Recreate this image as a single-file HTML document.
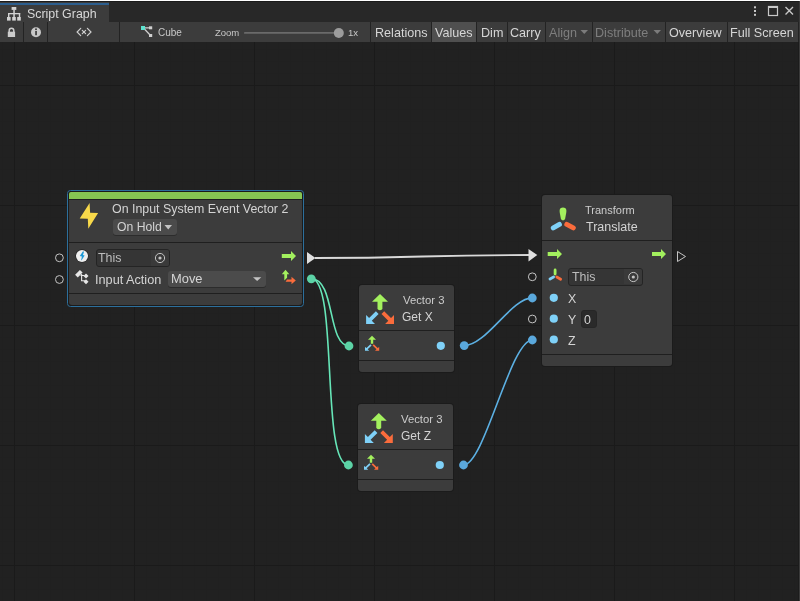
<!DOCTYPE html>
<html><head><meta charset="utf-8"><style>
*{box-sizing:border-box;margin:0;padding:0}
html,body{width:800px;height:601px;overflow:hidden;background:#212121;font-family:"Liberation Sans",sans-serif;color:#d2d2d2}
.abs{position:absolute}
#grid{position:absolute;left:0;top:42px;width:800px;height:559px;background-color:#212121;
 background-image:
  linear-gradient(to right, #1a1a1a 1px, transparent 1px),
  linear-gradient(to bottom, #1a1a1a 1px, transparent 1px),
  linear-gradient(to right, #202020 1px, transparent 1px),
  linear-gradient(to bottom, #202020 1px, transparent 1px);
 background-size:120px 120px,120px 120px,12px 12px,12px 12px;
 background-position:14px 43px,14px 43px,2px 7px,2px 7px;}
.t{position:absolute;white-space:nowrap;will-change:transform}
.node{position:absolute;background:#3c3c3c;border-radius:3px;box-shadow:0 0 0 1px #1b1b1b}
.div{position:absolute;left:0;right:0;height:1px;background:#1f1f1f}
.rect{position:absolute}
</style></head><body>
<div id="grid"></div>
<div class="rect" style="left:0;top:0;width:800px;height:1px;background:#ffffff"></div>
<div class="rect" style="left:0;top:1px;width:800px;height:21px;background:#282828"></div>
<div class="rect" style="left:0;top:1px;width:800px;height:1px;background:#1b1b1b"></div>
<div class="rect" style="left:0;top:2px;width:109px;height:20px;background:#3c3c3c"></div>
<div class="rect" style="left:0;top:3px;width:109px;height:2px;background:#2c5e8e"></div>
<div class="rect" style="left:799px;top:1px;width:1px;height:600px;background:#3a3a3a"></div>
<div class="rect" style="left:798px;top:42px;width:1px;height:559px;background:#1c1c1c"></div>
<svg class="abs" style="left:0;top:0" width="800" height="42" viewBox="0 0 800 42">
 <g fill="#d2d2d2">
 <rect x="11.6" y="7" width="4.7" height="2.9"/>
 <rect x="13.3" y="9.5" width="1.5" height="4"/>
 <rect x="8" y="13" width="12.2" height="1.3"/>
 <rect x="8" y="13" width="1.4" height="4"/>
 <rect x="18.8" y="13" width="1.4" height="4"/>
 <rect x="13.3" y="13" width="1.5" height="4"/>
 <rect x="7" y="17" width="3.6" height="3.6"/>
 <rect x="12.2" y="17" width="3.6" height="3.6"/>
 <rect x="17.2" y="17" width="3.6" height="3.6"/>
 </g>
 <g fill="#c8c8c8">
 <rect x="754" y="6.3" width="2" height="2"/>
 <rect x="754" y="10" width="2" height="2"/>
 <rect x="754" y="13.8" width="2" height="2"/>
 <rect x="768.5" y="6.5" width="9" height="9" fill="none" stroke="#c8c8c8" stroke-width="1.2"/>
 <rect x="768" y="6" width="10" height="2"/>
 </g>
 <path d="M785.5 7 L793 14.5 M793 7 L785.5 14.5" stroke="#c8c8c8" stroke-width="1.4"/>
</svg>
<div class="t" style="left:26.6px;top:8.00px;font-size:12.4px;line-height:12.4px;color:#d8d8d8;">Script Graph</div>

<div class="rect" style="left:0;top:22px;width:799px;height:20px;background:#232323"></div>
<div class="rect" style="left:0px;top:22px;width:23px;height:20px;background:#3c3c3c"></div>
<div class="rect" style="left:24px;top:22px;width:23px;height:20px;background:#3c3c3c"></div>
<div class="rect" style="left:48px;top:22px;width:71px;height:20px;background:#3c3c3c"></div>
<div class="rect" style="left:120px;top:22px;width:250px;height:20px;background:#3c3c3c"></div>
<div class="rect" style="left:371px;top:22px;width:60px;height:20px;background:#3c3c3c"></div>
<div class="rect" style="left:432px;top:22px;width:44px;height:20px;background:#4f4f4f"></div>
<div class="rect" style="left:477px;top:22px;width:30px;height:20px;background:#3c3c3c"></div>
<div class="rect" style="left:508px;top:22px;width:37px;height:20px;background:#3c3c3c"></div>
<div class="rect" style="left:546px;top:22px;width:46px;height:20px;background:#3c3c3c"></div>
<div class="rect" style="left:593px;top:22px;width:72px;height:20px;background:#3c3c3c"></div>
<div class="rect" style="left:666px;top:22px;width:61px;height:20px;background:#3c3c3c"></div>
<div class="rect" style="left:728px;top:22px;width:70px;height:20px;background:#3c3c3c"></div>
<div class="t" style="left:374.5px;top:26.93px;font-size:12.6px;line-height:12.6px;color:#d6d6d6;">Relations</div>

<div class="t" style="left:434.5px;top:26.93px;font-size:12.6px;line-height:12.6px;color:#d6d6d6;">Values</div>

<div class="t" style="left:480.75px;top:26.93px;font-size:12.6px;line-height:12.6px;color:#d6d6d6;">Dim</div>

<div class="t" style="left:509.5px;top:26.93px;font-size:12.6px;line-height:12.6px;color:#d6d6d6;">Carry</div>

<div class="t" style="left:669px;top:26.93px;font-size:12.6px;line-height:12.6px;color:#d6d6d6;">Overview</div>

<div class="t" style="left:730px;top:26.93px;font-size:12.6px;line-height:12.6px;color:#d6d6d6;">Full Screen</div>

<div class="t" style="left:548.75px;top:26.93px;font-size:12.6px;line-height:12.6px;color:#7e7e7e;">Align</div>

<div class="t" style="left:595px;top:26.93px;font-size:12.6px;line-height:12.6px;color:#7e7e7e;">Distribute</div>

<div class="t" style="left:158px;top:27.54px;font-size:10px;line-height:10px;color:#c8c8c8;">Cube</div>

<div class="t" style="left:215px;top:27.96px;font-size:9.5px;line-height:9.5px;color:#c8c8c8;">Zoom</div>

<div class="t" style="left:348px;top:27.87px;font-size:9.6px;line-height:9.6px;color:#c8c8c8;">1x</div>

<svg class="abs" style="left:0;top:0" width="800" height="42" viewBox="0 0 800 42">
  <path d="M9.2 32 V30.6 A2.3 2.3 0 0 1 13.8 30.6 V32" fill="none" stroke="#cccccc" stroke-width="1.5"/>
  <rect x="7.8" y="31.7" width="7.3" height="5.3" fill="#cccccc"/>
  <circle cx="36" cy="32.3" r="5" fill="#c8c8c8"/>
  <rect x="35.2" y="31" width="1.7" height="4.2" fill="#3c3c3c"/>
  <circle cx="36" cy="29.3" r="1" fill="#3c3c3c"/>
  <path d="M80.7 28.3 L77.1 32 L80.7 35.6 M87.4 28.3 L91 32 L87.4 35.6 M82.3 30.4 L85.6 33.6 M85.6 30.4 L82.3 33.6" fill="none" stroke="#d0d0d0" stroke-width="1.2" stroke-linecap="round"/>
  <path d="M143.5 27.8 L150 27.8 M143.5 28 L150.5 35.5" stroke="#d0d0d0" stroke-width="1.2"/>
  <rect x="141" y="26" width="4" height="4" fill="#5fe3d0"/>
  <rect x="149" y="26.3" width="3.2" height="3" fill="#d0d0d0"/>
  <rect x="149" y="34" width="3.2" height="3" fill="#d0d0d0"/>
  <rect x="244" y="32.1" width="96" height="1.7" rx="0.85" fill="#6a6a6a"/>
  <circle cx="338.8" cy="33" r="5" fill="#9c9c9c"/>
  <path d="M580.5 30 L588 30 L584.25 34 Z" fill="#7c7c7c"/>
  <path d="M653.5 30 L661 30 L657.25 34 Z" fill="#7c7c7c"/>
</svg>
<div class="abs" style="left:67px;top:190px;width:237px;height:117px;border:1.5px solid #2c6f9c;border-radius:3.5px"></div>
<div class="node" style="left:69px;top:192px;width:233px;height:113px"><div class="div" style="top:7px"></div><div class="div" style="top:50px"></div><div class="div" style="top:101px"></div><div class="abs" style="left:0;top:0;width:233px;height:7px;background:#86c552;border-radius:2px 2px 0 0"></div></div>
<div class="node" style="left:542px;top:195px;width:130px;height:171px"><div class="div" style="top:45px"></div><div class="div" style="top:159px"></div></div>
<div class="node" style="left:359px;top:285px;width:95px;height:87px"><div class="div" style="top:45px"></div><div class="div" style="top:75px"></div></div>
<div class="node" style="left:358px;top:404px;width:95px;height:87px"><div class="div" style="top:45px"></div><div class="div" style="top:75px"></div></div>
<div class="abs" style="left:112.8px;top:218.8px;width:64.4px;height:16.4px;background:#4b4b4b;border-radius:3px;box-shadow:0 1px 0 #2c2c2c"></div>
<div class="abs" style="left:95.5px;top:249.2px;width:74.3px;height:17.6px;background:#353535;border:1px solid #242424;border-radius:3px;overflow:hidden"><div class="abs" style="right:0;top:0;width:18px;height:16px;background:#3a3a3a"></div></div>
<div class="abs" style="left:168px;top:271px;width:98.2px;height:16.2px;background:#4b4b4b;border-radius:3px;box-shadow:0 1px 0 #2c2c2c"></div>
<div class="abs" style="left:568px;top:268px;width:74.5px;height:17.5px;background:#353535;border:1px solid #242424;border-radius:3px;overflow:hidden"><div class="abs" style="right:0;top:0;width:18px;height:15px;background:#3a3a3a"></div></div>
<div class="abs" style="left:581px;top:310.2px;width:15.5px;height:17.5px;background:#2a2a2a;border:1px solid #262626;border-radius:3px"></div>
<svg class="abs" style="left:0;top:0" width="800" height="601" viewBox="0 0 800 601">
 <path d="M315 258 C 420 258, 425 255, 530 255" fill="none" stroke="#d9d9d9" stroke-width="1.8"/>
 <path d="M311.4 278.7 C 335.4 278.7, 327.2 345.8, 349.2 345.8" fill="none" stroke="#66e6b8" stroke-width="1.6"/>
 <path d="M311.4 278.7 C 338.4 278.7, 320.5 465, 348.5 465" fill="none" stroke="#66e6b8" stroke-width="1.6"/>
 <path d="M464.2 345.6 C 486.2 345.6, 511.4 297.9, 532.4 297.9" fill="none" stroke="#5cb0e3" stroke-width="1.6"/>
 <path d="M463.5 465 C 484.5 465, 510.4 340, 532.4 340" fill="none" stroke="#5cb0e3" stroke-width="1.6"/>
 <circle cx="311.3" cy="278.8" r="4.4" fill="#5cd3a6"/>
 <circle cx="349" cy="346" r="4.4" fill="#5cd3a6"/>
 <circle cx="348.4" cy="465" r="4.4" fill="#5cd3a6"/>
 <circle cx="464.2" cy="345.6" r="4.4" fill="#5aa8dc"/>
 <circle cx="463.5" cy="465" r="4.4" fill="#5aa8dc"/>
 <circle cx="532.3" cy="298" r="4.4" fill="#5aa8dc"/>
 <circle cx="532.3" cy="340" r="4.4" fill="#5aa8dc"/>
 <circle cx="59.4" cy="257.8" r="3.9" fill="none" stroke="#c4c4c4" stroke-width="1"/>
 <circle cx="59.4" cy="279.5" r="3.9" fill="none" stroke="#c4c4c4" stroke-width="1"/>
 <circle cx="532.3" cy="276.8" r="3.9" fill="none" stroke="#c4c4c4" stroke-width="1"/>
 <circle cx="532.3" cy="319" r="3.9" fill="none" stroke="#c4c4c4" stroke-width="1"/>
 <path d="M307 252 L315.5 258 L307 264 Z" fill="#e0e0e0"/>
 <path d="M528.5 249 L537.3 255 L528.5 261.5 Z" fill="#e0e0e0"/>
 <path d="M677.5 251.5 L685.5 256.5 L677.5 261.5 Z" fill="none" stroke="#c4c4c4" stroke-width="1"/>
 <path d="M89.6 202.9 L90.1 212.8 L98.1 213 L88.3 228.8 L87.8 218.8 L79.7 218.6 Z" fill="#f8d94a"/>
 <circle cx="82" cy="255.9" r="6.6" fill="#232323"/>
 <circle cx="82" cy="255.9" r="6" fill="#efefef"/>
 <path d="M82.8 251.6 L84.1 251.6 L83.0 255.1 L84.6 255.6 L81.6 260.3 L81.1 260.3 L81.9 256.5 L79.8 256.0 Z" fill="#1d9ad8"/>
 <circle cx="160" cy="258" r="4.6" fill="none" stroke="#c4c4c4" stroke-width="1"/>
 <circle cx="160" cy="258" r="1.6" fill="#c4c4c4"/>
 <circle cx="633.3" cy="277" r="4.6" fill="none" stroke="#c4c4c4" stroke-width="1"/>
 <circle cx="633.3" cy="277" r="1.6" fill="#c4c4c4"/>
 <path d="M164.5 225 L172 225 L168.25 229.5 Z" fill="#c4c4c4"/>
 <path d="M253 277.3 L261.3 277.3 L257.15 281 Z" fill="#c4c4c4"/>
 <path d="M75.1 274.8 L79.9 270 L82.6 272.6 L77.8 277.4 Z" fill="#e6e6e6"/>
 <path d="M86 273.4 L88.5 275.9 L86 278.4 L83.5 275.9 Z" fill="#e6e6e6"/>
 <path d="M86 279.3 L88.5 281.8 L86 284.3 L83.5 281.8 Z" fill="#e6e6e6"/>
 <path d="M81.6 274 L81.6 280.7 L85 280.7 M80.5 275.5 L84 275.5" fill="none" stroke="#e6e6e6" stroke-width="1.1"/>
 <path d="M281.8 254 H291 V251 L296 256 L291 261 V258 H281.8 Z" fill="#a3f05e"/>
 <path d="M547.7 252 H557 V249 L562 254 L557 259 V256 H547.7 Z" fill="#a3f05e"/>
 <path d="M652 252 H661 V249 L666 254 L661 259 V256 H652 Z" fill="#a3f05e"/>
 <path d="M285.5 269.8 L289.3 274.3 L287.1 274.3 L287.1 277.8 L284.3 280.6 L284.3 274.3 L281.8 274.3 Z" fill="#a3f05e"/>
 <path d="M287 279.6 L291.5 279.6 L291.5 276.8 L295.8 280.5 L291.5 284.2 L291.5 281.8 L285.6 281.8 Z" fill="#fa6c3c"/>
 <path d="M563 207.6 C 566.6 207.6, 566.6 210.5, 566.2 213 L 565 219.3 Q 563 221.6 561 219.3 L 559.8 213 C 559.4 210.5, 559.4 207.6, 563 207.6 Z" fill="#a3f05e"/>
 <line x1="553.3" y1="227.9" x2="559.4" y2="224.4" stroke="#7fd1f8" stroke-width="5" stroke-linecap="round"/>
 <line x1="566.8" y1="224.4" x2="573.3" y2="227.9" stroke="#fa6c3c" stroke-width="5" stroke-linecap="round"/>
 <line x1="555.1" y1="270" x2="555.1" y2="274" stroke="#a3f05e" stroke-width="2.8" stroke-linecap="round"/>
 <line x1="550" y1="279" x2="553.6" y2="277" stroke="#7fd1f8" stroke-width="2.8" stroke-linecap="round"/>
 <line x1="556.8" y1="277" x2="560.6" y2="279.2" stroke="#fa6c3c" stroke-width="2.8" stroke-linecap="round"/>
 <circle cx="553.8" cy="297.8" r="4.1" fill="#7fd1f8"/>
 <circle cx="553.8" cy="318.7" r="4.1" fill="#7fd1f8"/>
 <circle cx="553.8" cy="339.5" r="4.1" fill="#7fd1f8"/>
 <circle cx="440.8" cy="345.8" r="4.1" fill="#7fd1f8"/>
 <circle cx="439.8" cy="465" r="4.1" fill="#7fd1f8"/>
 <g transform="translate(0,0)">
 <path d="M380 294.1 L388 301.7 L382.4 301.7 L382.4 309 Q380 311.5 377.5 309 L377.5 301.7 L372 301.7 Z" fill="#a3f05e"/>
 <path d="M366.1 315 L366.1 323.9 L375 323.9 L371.8 320.7 L378.6 313.9 L375.9 311.2 L369.1 318 Z" fill="#7fd1f8"/>
 <path d="M394 315 L394 323.9 L385.1 323.9 L388.3 320.7 L381.5 313.9 L384.2 311.2 L391 318 Z" fill="#fa6c3c"/>
</g><g transform="translate(-1.2,119)">
 <path d="M380 294.1 L388 301.7 L382.4 301.7 L382.4 309 Q380 311.5 377.5 309 L377.5 301.7 L372 301.7 Z" fill="#a3f05e"/>
 <path d="M366.1 315 L366.1 323.9 L375 323.9 L371.8 320.7 L378.6 313.9 L375.9 311.2 L369.1 318 Z" fill="#7fd1f8"/>
 <path d="M394 315 L394 323.9 L385.1 323.9 L388.3 320.7 L381.5 313.9 L384.2 311.2 L391 318 Z" fill="#fa6c3c"/>
</g><g transform="translate(0,0)">
 <path d="M372 335.8 L376 339.8 L373.2 339.8 L373.2 343.8 L370.8 343.8 L370.8 339.8 L368 339.8 Z" fill="#a3f05e"/>
 <path d="M365 347 L365 350.8 L369.2 350.8 L367.7 349.3 L371.6 345.4 L370.4 344.2 L366.5 348.1 Z" fill="#7fd1f8"/>
 <path d="M379.2 347 L379.2 350.8 L375 350.8 L376.5 349.3 L372.6 345.4 L373.8 344.2 L377.7 348.1 Z" fill="#fa6c3c"/>
</g><g transform="translate(-1,119)">
 <path d="M372 335.8 L376 339.8 L373.2 339.8 L373.2 343.8 L370.8 343.8 L370.8 339.8 L368 339.8 Z" fill="#a3f05e"/>
 <path d="M365 347 L365 350.8 L369.2 350.8 L367.7 349.3 L371.6 345.4 L370.4 344.2 L366.5 348.1 Z" fill="#7fd1f8"/>
 <path d="M379.2 347 L379.2 350.8 L375 350.8 L376.5 349.3 L372.6 345.4 L373.8 344.2 L377.7 348.1 Z" fill="#fa6c3c"/>
</g>
</svg>
<div class="t" style="left:112.4px;top:202.70px;font-size:12.4px;line-height:12.4px;color:#d4d4d4;">On Input System Event Vector 2</div>

<div class="t" style="left:116.5px;top:220.97px;font-size:12.2px;line-height:12.2px;color:#d4d4d4;">On Hold</div>

<div class="t" style="left:98.3px;top:251.80px;font-size:12.4px;line-height:12.4px;color:#bdbdbd;">This</div>

<div class="t" style="left:94.5px;top:273.55px;font-size:12.7px;line-height:12.7px;color:#d4d4d4;">Input Action</div>

<div class="t" style="left:170.7px;top:272.88px;font-size:12.9px;line-height:12.9px;color:#d4d4d4;">Move</div>

<div class="t" style="left:585px;top:205.49px;font-size:11px;line-height:11px;color:#cccccc;">Transform</div>

<div class="t" style="left:586px;top:221.22px;font-size:12.5px;line-height:12.5px;color:#d4d4d4;">Translate</div>

<div class="t" style="left:572.2px;top:271.00px;font-size:12.4px;line-height:12.4px;color:#bdbdbd;">This</div>

<div class="t" style="left:568.2px;top:292.50px;font-size:12.4px;line-height:12.4px;color:#d4d4d4;">X</div>

<div class="t" style="left:568.2px;top:313.50px;font-size:12.4px;line-height:12.4px;color:#d4d4d4;">Y</div>

<div class="t" style="left:568.2px;top:334.50px;font-size:12.4px;line-height:12.4px;color:#d4d4d4;">Z</div>

<div class="t" style="left:584px;top:313.50px;font-size:12.4px;line-height:12.4px;color:#d4d4d4;">0</div>

<div class="t" style="left:402.5px;top:295.43px;font-size:11.3px;line-height:11.3px;color:#cccccc;">Vector 3</div>

<div class="t" style="left:401.5px;top:310.64px;font-size:12px;line-height:12px;color:#d4d4d4;">Get X</div>

<div class="t" style="left:401.3px;top:414.23px;font-size:11.3px;line-height:11.3px;color:#cccccc;">Vector 3</div>

<div class="t" style="left:400.5px;top:429.54px;font-size:12px;line-height:12px;color:#d4d4d4;">Get Z</div>

</body></html>
